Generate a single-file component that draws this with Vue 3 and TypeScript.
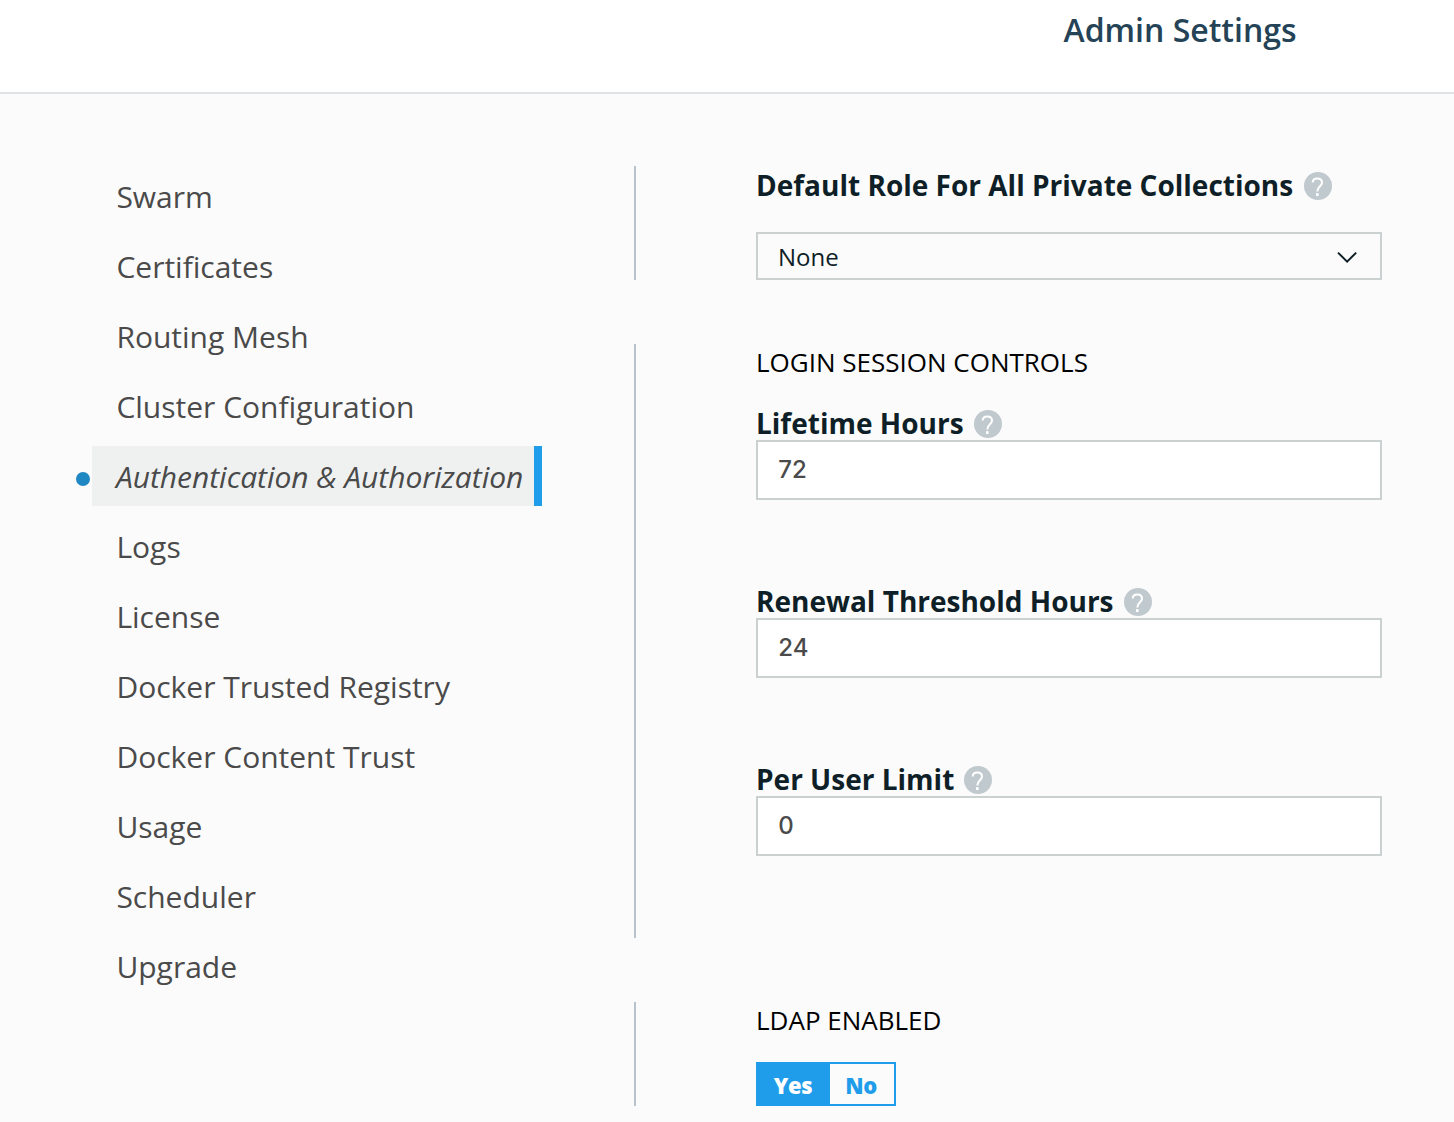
<script setup lang="ts">
import { ref } from 'vue'

interface Field {
  id: string
  label: string
  value: string
}

const navItems: string[] = [
  'Swarm',
  'Certificates',
  'Routing Mesh',
  'Cluster Configuration',
  'Authentication & Authorization',
  'Logs',
  'License',
  'Docker Trusted Registry',
  'Docker Content Trust',
  'Usage',
  'Scheduler',
  'Upgrade',
]
const active = ref('Authentication & Authorization')

const fields = ref<Field[]>([
  { id: 'lifetime', label: 'Lifetime Hours', value: '72' },
  { id: 'renewal', label: 'Renewal Threshold Hours', value: '24' },
  { id: 'limit', label: 'Per User Limit', value: '0' },
])

const ldapEnabled = ref(true)
</script>

<template>
  <div class="page">
    <header class="header">
      <h1 class="title">Admin Settings</h1>
    </header>

    <div class="body">
      <nav class="nav">
        <div
          v-for="item in navItems"
          :key="item"
          class="nav-row"
          :class="{ active: item === active }"
          @click="active = item"
        >
          <span class="marker"></span>
          <a class="nav-link">{{ item }}</a>
        </div>
      </nav>

      <main class="content">
        <section class="section role">
          <div class="label">
            <span>Default Role For All Private Collections</span>
            <svg class="help" viewBox="0 0 28 28">
              <circle cx="14" cy="14" r="14" />
              <path d="M8.7 10.6C8.7 8 10.5 6.4 13.3 6.4S18 8 18 10.5C18 14.2 13.3 14.4 13.3 19.4" />
              <rect x="12" y="21.2" width="2.6" height="2.8" />
            </svg>
          </div>
          <div class="select">
            <span>None</span>
            <svg class="chevron" viewBox="0 0 20 12">
              <path d="M1 1.6L10.1 10.6L19.2 1.6" />
            </svg>
          </div>
        </section>

        <section class="section session">
          <h2 class="heading">LOGIN SESSION CONTROLS</h2>
          <div v-for="field in fields" :key="field.id" class="field">
            <label class="label" :for="field.id">
              <span>{{ field.label }}</span>
              <svg class="help" viewBox="0 0 28 28">
                <circle cx="14" cy="14" r="14" />
                <path d="M8.7 10.6C8.7 8 10.5 6.4 13.3 6.4S18 8 18 10.5C18 14.2 13.3 14.4 13.3 19.4" />
                <rect x="12" y="21.2" width="2.6" height="2.8" />
              </svg>
            </label>
            <input :id="field.id" v-model="field.value" class="input" type="text" />
          </div>
        </section>

        <section class="section ldap">
          <h2 class="heading">LDAP ENABLED</h2>
          <div class="toggle">
            <button class="option yes" :class="{ on: ldapEnabled }" @click="ldapEnabled = true">Yes</button>
            <button class="option no" :class="{ on: !ldapEnabled }" @click="ldapEnabled = false">No</button>
          </div>
        </section>
      </main>
    </div>
  </div>
</template>

<style>
body {
  margin: 0;
  background: #fbfbfb;
}
</style>

<style scoped>
.page {
  box-sizing: border-box;
  width: 1454px;
  height: 1122px;
  overflow: hidden;
  background: #fbfbfb;
  font-family: 'Open Sans', sans-serif;
}
.page * {
  box-sizing: border-box;
}
.header {
  height: 94px;
  padding-left: 1063.5px;
  background: #fff;
  border-bottom: 2px solid #dfe3e6;
}
.title {
  margin: 0;
  font-size: 32px;
  line-height: 60px;
  font-weight: 600;
  color: #254356;
  white-space: nowrap;
}
.body {
  display: flex;
  padding-top: 72px;
}
.nav {
  display: flex;
  flex-direction: column;
  gap: 10px;
  width: 466px;
  margin-left: 76px;
  margin-right: 92px;
}
.nav-row {
  display: flex;
  align-items: center;
  height: 60px;
  cursor: pointer;
}
.marker {
  width: 14px;
  height: 14px;
  margin: 6px 2px 0 0;
  border-radius: 50%;
}
.nav-link {
  flex: 1;
  height: 60px;
  padding: 1px 0 0 24.4px;
  font-size: 30px;
  line-height: 60px;
  color: #4a4a4a;
  white-space: nowrap;
}
.active .marker {
  background: #1f88c3;
}
.active .nav-link {
  padding-left: 24px;
  background: #eff1f1;
  border-right: 8px solid #1f9dea;
  font-style: italic;
  letter-spacing: -0.04px;
}
.content {
  display: flex;
  flex-direction: column;
  gap: 64px;
  width: 748px;
}
.section {
  padding-left: 120px;
  border-left: 2px solid #b8c2cc;
}
.role {
  height: 114px;
}
.session {
  height: 594px;
}
.ldap {
  height: 104px;
}
.label {
  display: flex;
  align-items: center;
  height: 34px;
  font-size: 28px;
  line-height: 34px;
  font-weight: 700;
  color: #0f1f27;
  white-space: nowrap;
}
.role .label {
  height: 38px;
  margin-bottom: 28px;
  line-height: 38px;
}
.help {
  width: 28px;
  height: 28px;
  margin: 2px 0 0 10.4px;
}
.field:last-child .help {
  margin-left: 10px;
}
.help circle,
.help rect {
  stroke: none;
}
.help circle {
  fill: #c0c9ce;
}
.help rect {
  fill: #fff;
}
.help path {
  fill: none;
  stroke: #fff;
  stroke-width: 2;
}
.select {
  display: flex;
  align-items: center;
  justify-content: space-between;
  height: 48px;
  padding: 1px 23px 0 20px;
  border: 2px solid #cbd1d0;
  font-size: 24px;
  line-height: 34px;
  color: #0f1f27;
}
.chevron {
  width: 20px;
  height: 12px;
  fill: none;
  stroke: #0f1f27;
  stroke-width: 2;
}
.heading {
  margin: 0;
  font-size: 26px;
  line-height: 36px;
  font-weight: 400;
  color: #000;
}
.session .heading {
  margin-bottom: 26px;
}
.field {
  margin-bottom: 84px;
}
.input {
  display: block;
  width: 626px;
  height: 60px;
  margin: 0;
  padding: 0 20px 1px 20.3px;
  border: 2px solid #cbd1d0;
  border-radius: 0;
  outline: none;
  background: #fff;
  font-family: Inter, sans-serif;
  font-size: 24px;
  font-weight: 500;
  color: #4a4a4a;
}
.toggle {
  display: flex;
  width: 140px;
  height: 44px;
  margin-top: 24px;
  border: 2px solid #1f9dea;
}
.option {
  height: 40px;
  margin: 0;
  padding: 2px 2px 0 0;
  border: 0;
  background: transparent;
  font-family: inherit;
  font-size: 22px;
  line-height: 38px;
  font-weight: 800;
  letter-spacing: -0.4px;
  color: #1f9dea;
}
.yes {
  width: 72px;
}
.no {
  width: 64px;
}
.option.on {
  background: #1f9dea;
  color: #fff;
}
</style>
